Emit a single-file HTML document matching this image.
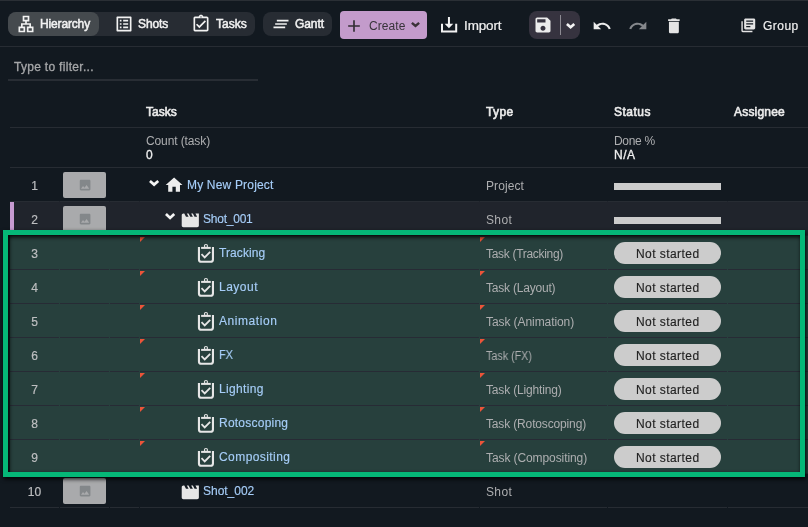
<!DOCTYPE html>
<html lang="en"><head><meta charset="utf-8"><title>Tasks</title>
<style>
html,body{margin:0;padding:0;}
html{background:#121920;}
body{width:808px;height:527px;overflow:hidden;background:#121920;position:relative;
 font-family:"Liberation Sans",sans-serif;font-size:12px;color:#adaeb0;}
.abs,.ic,.t,.box{position:absolute;}
.t{white-space:nowrap;line-height:20px;height:20px;margin-top:-14px;will-change:transform;}
.tb{font-size:12px;color:#f2f2f2;-webkit-text-stroke:0.5px #f2f2f2;}
.hd{color:#ececec;-webkit-text-stroke:0.6px #ececec;}
.lnk{color:#a6cdf8;-webkit-text-stroke:0.15px #a6cdf8;}
.num{color:#bdbec0;-webkit-text-stroke:0.2px #bdbec0;}
.wh{color:#efefef;-webkit-text-stroke:0.2px #efefef;}
.wb{color:#f0f0f0;-webkit-text-stroke:0.3px #f0f0f0;}
.rl{position:absolute;left:10px;width:798px;height:1px;background:linear-gradient(90deg,var(--c) 0 49px,transparent 49px 50px,var(--c) 50px 99px,transparent 99px 100px,var(--c) 100px 129px,transparent 129px 130px,var(--c) 130px 469px,transparent 469px 470px,var(--c) 470px 597px,transparent 597px 598px,var(--c) 598px 717px,transparent 717px 718px,var(--c) 718px);}
.dk{color:#38343a;}
.pilltx{color:#222;-webkit-text-stroke:0.15px #222;}
</style></head><body>

<div class="toolbar" role="toolbar">
<div class="box" style="left:0;top:0;width:808px;height:1px;background:#2a2f35"></div>
<div class="box" style="left:0;top:46px;width:808px;height:1px;background:#272c33"></div>
<div class="view-tabs">
<div class="box" style="left:8px;top:12px;width:247px;height:24px;border-radius:8px;background:#272c33"></div>
<div class="box" style="left:8px;top:12px;width:91px;height:24px;border-radius:8px;background:#454a4e"></div>
<div class="box" style="left:263px;top:12px;width:69px;height:24px;border-radius:8px;background:#272c33"></div>
<svg class="ic" style="left:15.7px;top:14px;width:20px;height:20px;" viewBox="0 0 24 24"><path fill="#f2f2f2" d="M13 22h8v-7h-3v-4h-5V9h3V2H8v7h3v2H6v4H3v7h8v-7H8v-2h8v2h-3v7zM10 7V4h4v3h-4zM9 17v3H5v-3h4zm10 0v3h-4v-3h4z"/></svg>
<span class="t tb" id="Hierarchy" style="left:40.0px;top:28px;letter-spacing:-0.15px;">Hierarchy</span>
<svg class="ic" style="left:113.9px;top:14px;width:20px;height:20px;" viewBox="0 0 24 24"><path fill="#f2f2f2" d="M11 7h6v2h-6zm0 4h6v2h-6zm0 4h6v2h-6zM7 7h2v2H7zm0 4h2v2H7zm0 4h2v2H7zM20.1 3H3.9c-.5 0-.9.4-.9.9v16.2c0 .4.4.9.9.9h16.2c.4 0 .9-.5.9-.9V3.9c0-.5-.5-.9-.9-.9zM19 19H5V5h14v14z"/></svg>
<span class="t tb" id="Shots" style="left:138.0px;top:28px;letter-spacing:-0.10px;">Shots</span>
<svg class="ic" style="left:190.75px;top:14px;width:20px;height:20px;" viewBox="0 0 24 24"><path fill="#f2f2f2" d="M18 9l-1.4-1.4-6.6 6.6-2.6-2.6L6 13l4 4 8-8zm1-6h-4.18C14.4 1.84 13.3 1 12 1c-1.3 0-2.4.84-2.82 2H5c-.14 0-.27.01-.4.04-.39.08-.74.28-1.01.55-.18.18-.33.4-.43.64-.1.23-.16.49-.16.77v14c0 .27.06.54.16.78s.25.45.43.64c.27.27.62.47 1.01.55.13.02.26.03.4.03h14c1.1 0 2-.9 2-2V5c0-1.1-.9-2-2-2zm-7-.25c.41 0 .75.34.75.75s-.34.75-.75.75-.75-.34-.75-.75.34-.75.75-.75zM19 19H5V5h14v14z"/></svg>
<span class="t tb" id="TasksTb" style="left:216.0px;top:28px;letter-spacing:0.04px;">Tasks</span>
<svg class="ic" style="left:270.7px;top:14px;width:20px;height:20px;" viewBox="0 0 24 24"><path fill="#f2f2f2" d="M5 13h14v-2H5v2zm-2 4h14v-2H3v2zM7 7v2h14V7H7z"/></svg>
<span class="t tb" id="Gantt" style="left:295.0px;top:28px;letter-spacing:-0.08px;">Gantt</span>
</div>
<div class="actions">
<div class="box" style="left:340px;top:11px;width:87px;height:28px;border-radius:4px;background:#c39bcb"></div>
<svg class="ic" style="left:343.9px;top:15.6px;width:20px;height:20px;" viewBox="0 0 24 24"><path fill="#332e34" d="M19 13h-6v6h-2v-6H5v-2h6V5h2v6h6v2z"/></svg>
<span class="t dk" id="Create" style="left:369.0px;top:30px;letter-spacing:0.09px;">Create</span>
<svg class="ic" style="left:411.0px;top:22.3px;width:9.00px;height:5.70px;overflow:visible" viewBox="0 0 9.00 5.70"><path fill="none" stroke="#3b3238" stroke-width="2.5" stroke-linejoin="miter" d="M0.88 0.88L4.50 3.93L8.12 0.88"/></svg>
<svg class="ic" style="left:440px;top:16px;width:18px;height:18px" viewBox="0 0 18 18"><path fill="#f2f2f2" d="M1 7.7h2v6.9h12.2v-6.9h2v8.9H1zM7.95 1h2v6.7h3.3L8.95 12.2 4.65 7.7h3.3z"/></svg>
<span class="t wh" id="Import" style="left:464.0px;top:30px;letter-spacing:-0.10px;transform:scaleX(1.121);transform-origin:0 0;">Import</span>
<div class="box" style="left:529px;top:11px;width:51px;height:28px;border-radius:8px;background:#36333f"></div>
<svg class="ic" style="left:532.5px;top:15.1px;width:20px;height:20px;" viewBox="0 0 24 24"><path fill="#ececec" d="M17 3H5c-1.11 0-2 .9-2 2v14c0 1.1.89 2 2 2h14c1.1 0 2-.9 2-2V7l-4-4zm-5 16c-1.66 0-3-1.34-3-3s1.34-3 3-3 3 1.34 3 3-1.34 3-3 3zm3-10H5V5h10v4z"/></svg>
<div class="box" style="left:560px;top:15px;width:1px;height:20px;background:#8d8b93"></div>
<svg class="ic" style="left:565.7px;top:22.9px;width:9.20px;height:6.10px;overflow:visible" viewBox="0 0 9.20 6.10"><path fill="none" stroke="#f4f4f4" stroke-width="2.6" stroke-linejoin="miter" d="M0.92 0.92L4.60 4.26L8.28 0.92"/></svg>
<svg class="ic" style="left:592.2px;top:16.1px;width:20px;height:20px;" viewBox="0 0 24 24"><path fill="#ececec" d="M12.5 8c-2.65 0-5.05.99-6.9 2.6L2 7v9h9l-3.62-3.62c1.39-1.16 3.16-1.88 5.12-1.88 3.54 0 6.55 2.31 7.6 5.5l2.37-.78C21.08 11.03 17.15 8 12.5 8z"/></svg>
<svg class="ic" style="left:628.2px;top:16.1px;width:20px;height:20px;" viewBox="0 0 24 24"><path fill="#85888c" d="M18.4 10.6C16.55 8.99 14.15 8 11.5 8c-4.65 0-8.58 3.03-9.96 7.22L3.9 16c1.05-3.19 4.05-5.5 7.6-5.5 1.95 0 3.73.72 5.12 1.88L13 16h9V7l-3.6 3.6z"/></svg>
<svg class="ic" style="left:664.0px;top:15.7px;width:19.8px;height:19.8px;" viewBox="0 0 24 24"><path fill="#e4e4e4" d="M6 19c0 1.1.9 2 2 2h8c1.1 0 2-.9 2-2V7H6v12zM19 4h-3.5l-1-1h-5l-1 1H5v2h14V4z"/></svg>
<svg class="ic" style="left:740.3px;top:17.1px;width:16.6px;height:16.6px;" viewBox="0 0 24 24"><path fill="#e4e4e4" d="M4 6H2v14c0 1.1.9 2 2 2h14v-2H4V6zm16-4H8c-1.1 0-2 .9-2 2v12c0 1.1.9 2 2 2h12c1.1 0 2-.9 2-2V4c0-1.1-.9-2-2-2zm-1 9H9V9h10v2zm-4 4H9v-2h6v2zm4-8H9V5h10v2z"/></svg>
<span class="t wh" id="Group" style="left:763.0px;top:30px;letter-spacing:0.47px;">Group</span>
</div>
</div>
<div class="filter">
<span class="t " id="Filter" style="left:14.0px;top:71px;color:#a6a7a9;-webkit-text-stroke:0.3px #a6a7a9;letter-spacing:0.30px;">Type to filter...</span>
<div class="box" style="left:8px;top:79px;width:250px;height:2px;background:#282d34"></div>
</div>
<div class="grid" role="table">
<div class="grid-head" role="row">
<div class="box" style="left:10px;top:127px;width:798px;height:1px;background:#272c33"></div>
<span class="t hd" id="TasksH" style="left:146.0px;top:116px;letter-spacing:-0.01px;">Tasks</span>
<span class="t hd" id="Type" style="left:486.0px;top:116px;letter-spacing:0.39px;">Type</span>
<span class="t hd" id="Status" style="left:614.0px;top:116px;letter-spacing:0.50px;">Status</span>
<span class="t hd" id="Assignee" style="left:734.0px;top:116px;letter-spacing:0.20px;">Assignee</span>
</div>
<div class="grid-summary" role="row">
<span class="t " id="Count" style="left:146.0px;top:145px;letter-spacing:-0.11px;">Count (task)</span>
<span class="t wb" id="Zero" style="left:146px;top:159px;">0</span>
<span class="t " id="Done" style="left:614.0px;top:145px;letter-spacing:-0.30px;">Done %</span>
<span class="t wb" id="NA" style="left:614.0px;top:159px;letter-spacing:0.47px;">N/A</span>
<div class="box" style="left:10px;top:167px;width:798px;height:1px;background:#272c33"></div>
</div>
<div class="grid-body">
<div class="box" style="left:10px;top:236px;width:798px;height:237px;background:#27403d"></div>
<div class="box" style="left:10px;top:201px;width:798px;height:35px;background:#20242c"></div>
<div class="box" style="left:10px;top:202px;width:4px;height:34px;background:#c79bd1"></div>
<div class="rl" style="top:201px;--c:#272c33"></div>
<div class="rl" style="top:235px;--c:#272c33"></div>
<div class="rl" style="top:269px;--c:#272b35"></div>
<div class="rl" style="top:303px;--c:#272b35"></div>
<div class="rl" style="top:337px;--c:#272b35"></div>
<div class="rl" style="top:371px;--c:#272b35"></div>
<div class="rl" style="top:405px;--c:#272b35"></div>
<div class="rl" style="top:439px;--c:#272b35"></div>
<div class="rl" style="top:473px;--c:#272c33"></div>
<div class="rl" style="top:507px;--c:#272c33"></div>
<div class="row" role="row">
<span class="t num" style="left:10px;width:49px;text-align:center;top:190px">1</span>
<div class="box" style="left:63px;top:172px;width:43px;height:26px;border-radius:2px;background:#a9aaac"></div><svg class="ic" style="left:77.7px;top:178.2px;width:14.2px;height:14.2px;" viewBox="0 0 24 24"><path fill="#83878a" d="M21 19V5c0-1.1-.9-2-2-2H5c-1.1 0-2 .9-2 2v14c0 1.1.9 2 2 2h14c1.1 0 2-.9 2-2zM8.5 13.5l2.5 3.01L14.5 12l4.5 6H5l3.5-4.5z"/></svg>
<svg class="ic" style="left:148.8px;top:179.8px;width:10.20px;height:6.50px;overflow:visible" viewBox="0 0 10.20 6.50"><path fill="none" stroke="#f4f4f4" stroke-width="2.7" stroke-linejoin="miter" d="M0.95 0.95L5.10 4.59L9.25 0.95"/></svg>
<svg class="ic" style="left:164.1px;top:175.3px;width:20.2px;height:20.2px;" viewBox="0 0 24 24"><path fill="#ececec" d="M10 20v-6h4v6h5v-8h3L12 3 2 12h3v8z"/></svg>
<span class="t lnk" id="Proj" style="left:187.0px;top:189px;letter-spacing:0.18px;">My New Project</span>
<span class="t " id="Project" style="left:486.0px;top:190px;letter-spacing:0.09px;">Project</span>
<div class="box" style="left:614px;top:183px;width:107px;height:7px;background:#cccccc"></div>
</div>
<div class="row current" role="row">
<span class="t num" style="left:10px;width:49px;text-align:center;top:224px">2</span>
<div class="box" style="left:63px;top:206px;width:43px;height:26px;border-radius:2px;background:#a9aaac"></div><svg class="ic" style="left:77.7px;top:212.2px;width:14.2px;height:14.2px;" viewBox="0 0 24 24"><path fill="#83878a" d="M21 19V5c0-1.1-.9-2-2-2H5c-1.1 0-2 .9-2 2v14c0 1.1.9 2 2 2h14c1.1 0 2-.9 2-2zM8.5 13.5l2.5 3.01L14.5 12l4.5 6H5l3.5-4.5z"/></svg>
<svg class="ic" style="left:164.9px;top:213.4px;width:10.20px;height:6.90px;overflow:visible" viewBox="0 0 10.20 6.90"><path fill="none" stroke="#f4f4f4" stroke-width="2.7" stroke-linejoin="miter" d="M0.95 0.95L5.10 4.99L9.25 0.95"/></svg>
<svg class="ic" style="left:180.0px;top:209.7px;width:20.6px;height:20.6px;" viewBox="0 0 24 24"><path fill="#e6e6e6" d="M18 4l2 4h-3l-2-4h-2l2 4h-3l-2-4H8l2 4H7L5 4H4c-1.1 0-1.99.9-1.99 2L2 18c0 1.1.9 2 2 2h16c1.1 0 2-.9 2-2V4h-4z"/></svg>
<span class="t lnk" id="Shot1" style="left:203.0px;top:223px;letter-spacing:-0.23px;">Shot_001</span>
<span class="t " id="ShotT" style="left:486.0px;top:224px;letter-spacing:0.37px;">Shot</span>
<div class="box" style="left:614px;top:217px;width:107px;height:7px;background:#cccccc"></div>
</div>
<div class="row selected" role="row">
<span class="t num" style="left:10px;width:49px;text-align:center;top:258px">3</span>
<svg class="ic" style="left:140px;top:237px;width:5px;height:5px" viewBox="0 0 5 5"><path fill="#ec5439" d="M0 0H5L0 5z"/></svg>
<svg class="ic" style="left:480px;top:237px;width:5px;height:5px" viewBox="0 0 5 5"><path fill="#ec5439" d="M0 0H5L0 5z"/></svg>
<svg class="ic" style="left:196px;top:243px;width:20px;height:22px" viewBox="0 0 20 22"><g fill="none" stroke="#e6e6e6"><path stroke-width="2.1" d="M2.95 3.9V16.4a2.4 2.4 0 0 0 2.4 2.4H14.55a2.4 2.4 0 0 0 2.4-2.4V3.9"/><path stroke-width="2" d="M5.1 4.9H14.8"/><circle cx="9.95" cy="3" r="1.55" stroke-width="1.1"/><path stroke-width="1.8" d="M5.5 11.2L8.7 14.4L14.2 8.8"/></g></svg>
<span class="t lnk" id="nTracking" style="left:219.0px;top:257px;letter-spacing:0.09px;">Tracking</span>
<span class="t " id="tTracking" style="left:486.0px;top:258px;letter-spacing:-0.30px;">Task (Tracking)</span>
<div class="box" style="left:614px;top:242px;width:107px;height:22px;border-radius:11px;background:#cccccc"></div>
<span class="t pilltx" id="NS0" style="left:636.0px;top:258px;letter-spacing:0.44px;">Not started</span>
</div>
<div class="row selected" role="row">
<span class="t num" style="left:10px;width:49px;text-align:center;top:292px">4</span>
<svg class="ic" style="left:140px;top:271px;width:5px;height:5px" viewBox="0 0 5 5"><path fill="#ec5439" d="M0 0H5L0 5z"/></svg>
<svg class="ic" style="left:480px;top:271px;width:5px;height:5px" viewBox="0 0 5 5"><path fill="#ec5439" d="M0 0H5L0 5z"/></svg>
<svg class="ic" style="left:196px;top:277px;width:20px;height:22px" viewBox="0 0 20 22"><g fill="none" stroke="#e6e6e6"><path stroke-width="2.1" d="M2.95 3.9V16.4a2.4 2.4 0 0 0 2.4 2.4H14.55a2.4 2.4 0 0 0 2.4-2.4V3.9"/><path stroke-width="2" d="M5.1 4.9H14.8"/><circle cx="9.95" cy="3" r="1.55" stroke-width="1.1"/><path stroke-width="1.8" d="M5.5 11.2L8.7 14.4L14.2 8.8"/></g></svg>
<span class="t lnk" id="nLayout" style="left:219.0px;top:291px;letter-spacing:0.50px;">Layout</span>
<span class="t " id="tLayout" style="left:486.0px;top:292px;letter-spacing:-0.21px;">Task (Layout)</span>
<div class="box" style="left:614px;top:276px;width:107px;height:22px;border-radius:11px;background:#cccccc"></div>
<span class="t pilltx" id="NS1" style="left:636.0px;top:292px;letter-spacing:0.44px;">Not started</span>
</div>
<div class="row selected" role="row">
<span class="t num" style="left:10px;width:49px;text-align:center;top:326px">5</span>
<svg class="ic" style="left:140px;top:305px;width:5px;height:5px" viewBox="0 0 5 5"><path fill="#ec5439" d="M0 0H5L0 5z"/></svg>
<svg class="ic" style="left:480px;top:305px;width:5px;height:5px" viewBox="0 0 5 5"><path fill="#ec5439" d="M0 0H5L0 5z"/></svg>
<svg class="ic" style="left:196px;top:311px;width:20px;height:22px" viewBox="0 0 20 22"><g fill="none" stroke="#e6e6e6"><path stroke-width="2.1" d="M2.95 3.9V16.4a2.4 2.4 0 0 0 2.4 2.4H14.55a2.4 2.4 0 0 0 2.4-2.4V3.9"/><path stroke-width="2" d="M5.1 4.9H14.8"/><circle cx="9.95" cy="3" r="1.55" stroke-width="1.1"/><path stroke-width="1.8" d="M5.5 11.2L8.7 14.4L14.2 8.8"/></g></svg>
<span class="t lnk" id="nAnimation" style="left:219.0px;top:325px;letter-spacing:0.56px;">Animation</span>
<span class="t " id="tAnimation" style="left:486.0px;top:326px;letter-spacing:-0.08px;">Task (Animation)</span>
<div class="box" style="left:614px;top:310px;width:107px;height:22px;border-radius:11px;background:#cccccc"></div>
<span class="t pilltx" id="NS2" style="left:636.0px;top:326px;letter-spacing:0.44px;">Not started</span>
</div>
<div class="row selected" role="row">
<span class="t num" style="left:10px;width:49px;text-align:center;top:360px">6</span>
<svg class="ic" style="left:140px;top:339px;width:5px;height:5px" viewBox="0 0 5 5"><path fill="#ec5439" d="M0 0H5L0 5z"/></svg>
<svg class="ic" style="left:480px;top:339px;width:5px;height:5px" viewBox="0 0 5 5"><path fill="#ec5439" d="M0 0H5L0 5z"/></svg>
<svg class="ic" style="left:196px;top:345px;width:20px;height:22px" viewBox="0 0 20 22"><g fill="none" stroke="#e6e6e6"><path stroke-width="2.1" d="M2.95 3.9V16.4a2.4 2.4 0 0 0 2.4 2.4H14.55a2.4 2.4 0 0 0 2.4-2.4V3.9"/><path stroke-width="2" d="M5.1 4.9H14.8"/><circle cx="9.95" cy="3" r="1.55" stroke-width="1.1"/><path stroke-width="1.8" d="M5.5 11.2L8.7 14.4L14.2 8.8"/></g></svg>
<span class="t lnk" id="nFX" style="left:219.0px;top:359px;letter-spacing:0.00px;transform:scaleX(0.915);transform-origin:0 0;">FX</span>
<span class="t " id="tFX" style="left:486.0px;top:360px;letter-spacing:0.00px;transform:scaleX(0.894);transform-origin:0 0;">Task (FX)</span>
<div class="box" style="left:614px;top:344px;width:107px;height:22px;border-radius:11px;background:#cccccc"></div>
<span class="t pilltx" id="NS3" style="left:636.0px;top:360px;letter-spacing:0.44px;">Not started</span>
</div>
<div class="row selected" role="row">
<span class="t num" style="left:10px;width:49px;text-align:center;top:394px">7</span>
<svg class="ic" style="left:140px;top:373px;width:5px;height:5px" viewBox="0 0 5 5"><path fill="#ec5439" d="M0 0H5L0 5z"/></svg>
<svg class="ic" style="left:480px;top:373px;width:5px;height:5px" viewBox="0 0 5 5"><path fill="#ec5439" d="M0 0H5L0 5z"/></svg>
<svg class="ic" style="left:196px;top:379px;width:20px;height:22px" viewBox="0 0 20 22"><g fill="none" stroke="#e6e6e6"><path stroke-width="2.1" d="M2.95 3.9V16.4a2.4 2.4 0 0 0 2.4 2.4H14.55a2.4 2.4 0 0 0 2.4-2.4V3.9"/><path stroke-width="2" d="M5.1 4.9H14.8"/><circle cx="9.95" cy="3" r="1.55" stroke-width="1.1"/><path stroke-width="1.8" d="M5.5 11.2L8.7 14.4L14.2 8.8"/></g></svg>
<span class="t lnk" id="nLighting" style="left:219.0px;top:393px;letter-spacing:0.33px;">Lighting</span>
<span class="t " id="tLighting" style="left:486.0px;top:394px;letter-spacing:-0.16px;">Task (Lighting)</span>
<div class="box" style="left:614px;top:378px;width:107px;height:22px;border-radius:11px;background:#cccccc"></div>
<span class="t pilltx" id="NS4" style="left:636.0px;top:394px;letter-spacing:0.44px;">Not started</span>
</div>
<div class="row selected" role="row">
<span class="t num" style="left:10px;width:49px;text-align:center;top:428px">8</span>
<svg class="ic" style="left:140px;top:407px;width:5px;height:5px" viewBox="0 0 5 5"><path fill="#ec5439" d="M0 0H5L0 5z"/></svg>
<svg class="ic" style="left:480px;top:407px;width:5px;height:5px" viewBox="0 0 5 5"><path fill="#ec5439" d="M0 0H5L0 5z"/></svg>
<svg class="ic" style="left:196px;top:413px;width:20px;height:22px" viewBox="0 0 20 22"><g fill="none" stroke="#e6e6e6"><path stroke-width="2.1" d="M2.95 3.9V16.4a2.4 2.4 0 0 0 2.4 2.4H14.55a2.4 2.4 0 0 0 2.4-2.4V3.9"/><path stroke-width="2" d="M5.1 4.9H14.8"/><circle cx="9.95" cy="3" r="1.55" stroke-width="1.1"/><path stroke-width="1.8" d="M5.5 11.2L8.7 14.4L14.2 8.8"/></g></svg>
<span class="t lnk" id="nRotoscoping" style="left:219.0px;top:427px;letter-spacing:0.23px;">Rotoscoping</span>
<span class="t " id="tRotoscoping" style="left:486.0px;top:428px;letter-spacing:-0.15px;">Task (Rotoscoping)</span>
<div class="box" style="left:614px;top:412px;width:107px;height:22px;border-radius:11px;background:#cccccc"></div>
<span class="t pilltx" id="NS5" style="left:636.0px;top:428px;letter-spacing:0.44px;">Not started</span>
</div>
<div class="row selected" role="row">
<span class="t num" style="left:10px;width:49px;text-align:center;top:462px">9</span>
<svg class="ic" style="left:140px;top:441px;width:5px;height:5px" viewBox="0 0 5 5"><path fill="#ec5439" d="M0 0H5L0 5z"/></svg>
<svg class="ic" style="left:480px;top:441px;width:5px;height:5px" viewBox="0 0 5 5"><path fill="#ec5439" d="M0 0H5L0 5z"/></svg>
<svg class="ic" style="left:196px;top:447px;width:20px;height:22px" viewBox="0 0 20 22"><g fill="none" stroke="#e6e6e6"><path stroke-width="2.1" d="M2.95 3.9V16.4a2.4 2.4 0 0 0 2.4 2.4H14.55a2.4 2.4 0 0 0 2.4-2.4V3.9"/><path stroke-width="2" d="M5.1 4.9H14.8"/><circle cx="9.95" cy="3" r="1.55" stroke-width="1.1"/><path stroke-width="1.8" d="M5.5 11.2L8.7 14.4L14.2 8.8"/></g></svg>
<span class="t lnk" id="nCompositing" style="left:219.0px;top:461px;letter-spacing:0.43px;">Compositing</span>
<span class="t " id="tCompositing" style="left:486.0px;top:462px;letter-spacing:-0.09px;">Task (Compositing)</span>
<div class="box" style="left:614px;top:446px;width:107px;height:22px;border-radius:11px;background:#cccccc"></div>
<span class="t pilltx" id="NS6" style="left:636.0px;top:462px;letter-spacing:0.44px;">Not started</span>
</div>
<div class="row" role="row">
<span class="t num" style="left:10px;width:49px;text-align:center;top:496px">10</span>
<div class="box" style="left:63px;top:478px;width:43px;height:26px;border-radius:2px;background:#a9aaac"></div><svg class="ic" style="left:77.7px;top:484.2px;width:14.2px;height:14.2px;" viewBox="0 0 24 24"><path fill="#83878a" d="M21 19V5c0-1.1-.9-2-2-2H5c-1.1 0-2 .9-2 2v14c0 1.1.9 2 2 2h14c1.1 0 2-.9 2-2zM8.5 13.5l2.5 3.01L14.5 12l4.5 6H5l3.5-4.5z"/></svg>
<svg class="ic" style="left:180.0px;top:481.7px;width:20.6px;height:20.6px;" viewBox="0 0 24 24"><path fill="#e6e6e6" d="M18 4l2 4h-3l-2-4h-2l2 4h-3l-2-4H8l2 4H7L5 4H4c-1.1 0-1.99.9-1.99 2L2 18c0 1.1.9 2 2 2h16c1.1 0 2-.9 2-2V4h-4z"/></svg>
<span class="t lnk" id="Shot2" style="left:203.0px;top:495px;letter-spacing:-0.02px;">Shot_002</span>
<span class="t " id="ShotT2" style="left:486.0px;top:496px;letter-spacing:0.37px;">Shot</span>
</div>
</div>
</div>
<div class="box" style="left:3px;top:230px;width:792px;height:237px;border:5px solid #05b777;filter:drop-shadow(1px 2px 2.2px rgba(0,0,0,.92))"></div>
</body></html>
